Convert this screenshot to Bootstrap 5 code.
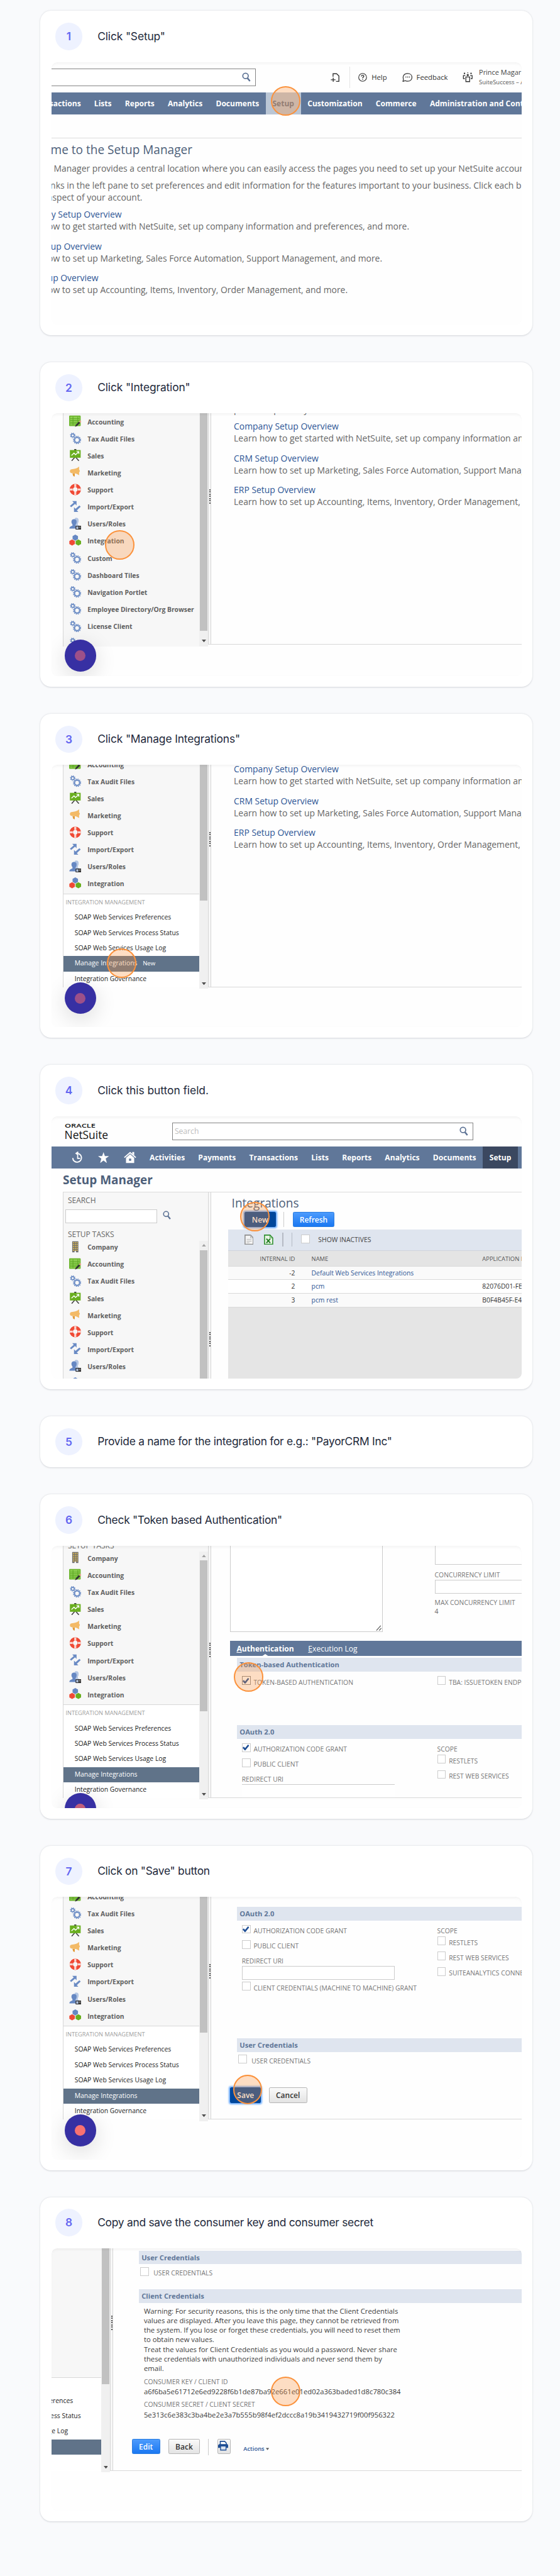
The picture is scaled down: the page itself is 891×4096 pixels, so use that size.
<!DOCTYPE html>
<html lang="en">
<head>
<meta charset="utf-8">
<meta name="viewport" content="width=device-width, initial-scale=1">
<title>NetSuite integration setup guide</title>
<link href="https://cdn.jsdelivr.net/npm/bootstrap@5.3.0/dist/css/bootstrap.min.css" rel="stylesheet">
<style>
html{overflow:hidden;background:#f9fafc}
body{zoom:.8695;background:#f9fafc;font-family:"Open Sans","Noto Sans",sans-serif;color:#1e293b;overflow:hidden}
.guide{width:900px;margin-left:74px;padding-top:20px;padding-bottom:94px;gap:49.5px}
.step{border:0;border-radius:20px;background:#fff;height:593px;padding:0 20px;box-shadow:0 1px 3px rgba(15,23,42,.17)}
.step-short{height:93.5px}
.step-head{height:93.5px;flex:none;padding-left:7px;gap:27.5px}
.step-short .step-head{height:93.5px}
.step-num{width:50px;height:50px;background:#eef2ff;color:#6366f1;font:600 20px/1 Inter,sans-serif}
.step-title{font:400 20px/28px Inter,sans-serif;color:#1e293b;margin:0;white-space:nowrap;letter-spacing:-.3px}
.step:nth-child(-n+3) .step-title{letter-spacing:-.14px}
.step:nth-child(4) .step-title{letter-spacing:-.04px}
/* captured window */
.shot{position:relative;height:480px;flex:none;overflow:hidden;border-radius:10px;background:#fefefe;white-space:nowrap;font-size:12px;line-height:16px;color:#666}
.shot::after{content:"";position:absolute;inset:0;border-radius:10px;box-shadow:inset 0 6px 6px -4px rgba(0,0,0,.05),inset 0 0 2px rgba(0,0,0,.025);pointer-events:none}
.tap{position:absolute;width:54px;height:54px;margin:-27px 0 0 -27px;border:2.4px solid #fb923c;border-radius:50%;background:rgba(251,146,60,.3)}
.rec{position:absolute;left:24px;width:58px;height:58px;border-radius:50%;background:#3730a3;box-shadow:0 10px 40px rgba(0,0,0,.14);display:flex;align-items:center;justify-content:center}
.rec i{width:20px;height:20px;border-radius:50%;background:#9d5089}
.tap1{left:429px;top:71.5px}.tap2{left:125.5px;top:240.5px}.tap3{left:129px;top:363px}.tap4{left:372.3px;top:184.3px}
.tap6{left:360.4px;top:239.9px}.tap7{left:359.2px;top:352.2px}.tap8{left:429.2px;top:261.7px}
.rec2{top:414px}.rec3{top:398px}.rec6{top:452.5px}.rec6 i{background:#c25f7b}.rec7{top:398px}.rec7 i{background:#f87171}
/* header */
.topbar{height:56px}
.find{height:32px;border:1.5px solid #858585;background:#fff;margin-top:12px;flex:none;padding:0 8px 0 3px;font-size:14px;color:#bdbdbd}
.find-a{width:384px;margin-left:-10px}.find-b{width:550.5px;margin-left:221.5px}
.tool{font-size:13px;font-weight:500;color:#333}
.tool-page{margin-left:136.5px}
.vline{width:1px;height:39px;background:#e4e4e4;margin:0 15px 0 18.5px}
.who{font-size:12.6px;line-height:18px;color:#444}.who small{font-size:10.9px;display:block;color:#555}
.gbar{height:40px;background:#607799;color:#fff;font-weight:700;font-size:13.9px}
.gbar span{padding:1px 12.2px 0;height:40px;line-height:40px;flex:none}
.gbar-a{padding-left:0}.gbar-a span:first-child{margin-left:-47.4px}
.gbar .hot{background:#bac6d5;color:#66758c}
.gbar .cur{background:#3b4860}
.gico{width:47.8px;flex:none;text-align:center}
.gbar-b{padding-left:24.3px}
/* setup home text */
.intro{font-size:16px;line-height:21.7px;color:#666}
.intro p{margin:0 0 14.7px}.intro b{font-weight:400;color:#2d5595;display:block}
.home-line{height:43px;border-bottom:2px solid #dcdcdc}
.home{margin-left:-63px;padding-top:6px}
.big{font-size:21.9px;line-height:30px;color:#4d5f79;margin:0}
.home .big{margin-bottom:9.5px}
.home .p1{margin:0 0 9.4px -11.5px}.home .p2{margin:0 0 9.6px}.home .p2 span{margin-left:-8px}
/* sidebar */
.pane-side{width:250px;margin-left:20.5px;border-left:2px solid #d8d8d8;background:#f7f7f7;overflow:hidden;flex:none;display:flex;flex-direction:column}
.task{height:31.2px;flex:none;display:flex;align-items:center;padding:0 0 2.5px 10.5px;gap:11.5px;font-weight:700;color:#606060;font-size:11.9px}
.task svg{width:22.5px;height:22.5px;margin-top:-4px;flex:none}
.subs{background:#fff;border-top:2px solid #d8d8d8;flex:1 0 auto;color:#222}
.subs h6{font-size:10.6px;line-height:16px;margin:6.5px 0 6.5px 4.5px;font-weight:400;color:#a0a0a0}
.subs div{height:28px;line-height:27px;padding-left:21px;font-size:11.95px}
.subs .on{background:#607389;color:#fff}.subs .on small{font-size:11px;margin-left:10px}
.track{width:16.5px;flex:none;background:#f0f0f0;display:flex;flex-direction:column;align-items:center;padding:0 1px 0 1px}
.thumb{width:14px;background:#c1c1c1}
.track svg{width:8px;height:5px;display:block}
.track .dn{margin:auto 0 7px}
.grip{width:5px;flex:none;background:#f7f7f7;border:solid #d6d6d6;border-width:0 1.5px 0 1px;align-self:stretch}
.grip i{display:block;width:2px;height:27px;margin-left:1px;background:repeating-linear-gradient(#555 0 2px,transparent 2px 4px)}
.pane-main{flex:1 1 0;min-width:0;overflow:hidden}
.right{flex:1 1 0;min-width:0;border-bottom:2px solid #d9d9d9;display:flex}
.s2 .pane-side,.s2 .track{height:426px}.s2 .right{height:423px}.s2 .task:first-child{margin-top:2px}.s2 .thumb{height:398px}.s2 .grip i{margin-top:139px}
.s2 .intro{padding-left:42px;margin-top:-17.5px}.s2 .intro .cut{margin-bottom:9.6px}
.s3 .pane-side{height:407px}.s3 .track{height:410px}.s3 .right{height:407px}.s3 .task:first-child{margin-top:-13.7px}.s3 .thumb{height:248.6px}.s3 .grip i{margin-top:123px}
.s3 .intro{padding-left:42px;margin-top:-2px}
.s8 .pane-side{margin-left:-159px}
.s8 .fill{height:235.4px;flex:none}
/* shot 4 */
.logo{margin-left:24px;padding-top:12.5px;width:90px;color:#111}
.logo span{display:block;font:600 10px/12px "Open Sans",sans-serif;transform:scaleX(1.47);transform-origin:0 0;width:40px}
.logo b{display:block;font-weight:400;font-size:20px;line-height:22px;margin-top:-1.5px}
.s4 .find-b{margin-left:107.5px}
.mgr{height:43px;line-height:43px;font-size:21.8px;font-weight:700;color:#4d5f79;padding-left:21px}
.s4 .split{height:342px}.s4 .pane-side,.s4 .track{height:342px}.s4 .pane-side,.s4 .right{border-top:2px solid #dcdcdc}
.s4 .right{border-bottom:0;height:342px}
.s4 .track{margin-top:88px;height:254px;padding-top:6px}.s4 .thumb{margin-top:6px;height:240px}
.s4 .track-col{background:#f7f7f7;border-top:2px solid #dcdcdc}
.s4 .grip i{margin-top:255px}
.cap{font-size:13.8px;line-height:18px;color:#666;padding-left:8.5px;flex:none}
.qbox{width:168px;height:25px;border:1.5px solid #ccc;background:#fff;margin:0 0 0 4.5px}
.list-box{margin-left:32px}
.list-box .big{padding-left:6px;height:35px;line-height:40px}
.bt{height:28px;border-radius:2.5px;font-size:13.8px;font-weight:600;line-height:27px;text-align:center;flex:none;color:#fff;background:linear-gradient(#4c9bfd,#1a78f2);border:1px solid #2b7de0;padding:0}
.bt-dark{background:#00479b;border-color:#00479b;box-shadow:0 0 3px 2px rgba(70,150,250,.8)}
.bt-grey{background:linear-gradient(#fafafa,#e3e3e3);border-color:#b5b5b5;color:#333}
.vs{width:1.5px;background:#ccc;flex:none}
.tools{height:39px;background:#dfe5ef;margin-top:4px;border-bottom:1px solid #cfd4dc}
.box{width:16px;height:16px;border:1.2px solid #ccc;background:#fff;flex:none;display:block}
.grid-row{height:24.9px;line-height:23px;border-bottom:1.3px solid #dadada;background:#fafafa;color:#333;display:flex;font-size:11.95px}
.grid-row span:nth-child(1){width:122px;text-align:right;flex:none}.grid-row span:nth-child(2){width:312.5px;margin-left:30px;flex:none;color:#2d5595}
.grid-row.hd{height:29px;line-height:29px;font-size:10.85px;background:#e4e4e4;color:#555}.grid-row.hd span:nth-child(2){color:#555}
.rest{background:#e5e5e5;height:140px}
/* forms */
.form-lab{color:#777;font-size:11.9px}
.s6 .split{height:464px}.s6 .pane-side{height:461.5px}.s6 .track{height:453.5px;margin-top:10.5px;padding-top:6px}.s6 .track-col{background:#f7f7f7}
.s6 .right{height:461.5px}.s6 .cap{margin-top:-9px;margin-bottom:1px}.s6 .thumb{height:276px;margin-top:5px}.s6 .grip i{margin-top:177.7px}
.area{width:280px;height:157.5px;border:1.5px solid #ccc;border-top:0;margin-left:34.5px;background:#fff;flex:none}
.side-fields{margin-left:95px}
.side-fields .b1{height:34.5px;width:200px;border:1.5px solid #ccc;border-top:0;margin-bottom:12.5px;background:#fff}
.side-fields .b2{height:25.5px;width:200px;border:1.5px solid #ccc;margin-bottom:8.5px;background:#fff}
.tabs6{height:28px;margin:16.3px 0 0 34.5px;background:#607799;color:#fff;font-size:13.9px;line-height:29px;padding-left:12.5px;gap:26px}
.tabs6 b{position:relative}
.tabs6 b::after{content:"";position:absolute;left:46px;bottom:-1px;border:solid transparent;border-width:0 8px 5px;border-bottom-color:#fff}
.band{height:25px;line-height:25px;background:#dfe5ef;color:#607799;font-weight:700;font-size:12.9px;padding-left:4.5px;margin-left:48px}
.cols{margin-left:56.5px;display:flex}
.cols>div:first-child{width:357.5px;flex:none}
.ck{height:28px;display:flex;gap:5.5px}.ck .form-lab{padding-top:4px}
.ck .box{display:flex;align-items:center;justify-content:center}
.redir{height:25px;width:280px;border:1.5px solid #ccc;background:#fff}
.pt8{padding-top:8px}.scope{margin:12px 0 1.3px}
.uc{margin-left:50.5px;padding-top:5px;gap:8px}
.warn{font-size:13px;line-height:17.6px;color:#3c3c3c;margin-left:56.8px}
</style>
</head>
<body>
<svg width="0" height="0" class="position-absolute top-0">
<symbol id="mag" viewBox="0 0 16 18"><circle cx="6.5" cy="6.5" r="5" fill="none" stroke="#5d7395" stroke-width="2"/><path d="M10 10.5l4.6 5.6" stroke="#5d7395" stroke-width="2.8"/></symbol>
<symbol id="gears" viewBox="0 0 24 24"><g fill="none" stroke="#6a8bc4"><circle cx="7" cy="6.5" r="3" stroke-width="2"/><circle cx="7" cy="6.5" r="4.6" stroke-width="1.5" stroke-dasharray="1.7 1.91"/><circle cx="15.5" cy="15.5" r="5" stroke-width="2.6"/><circle cx="15.5" cy="15.5" r="7.1" stroke-width="2" stroke-dasharray="2 1.72"/></g></symbol>
<symbol id="book" viewBox="0 0 24 24"><rect x="0" y="1" width="22.5" height="20.5" rx="1.5" fill="#6cb52d"/><rect x="2" y="3" width="18.5" height="16.5" fill="#8fd053"/><path d="M7.5 3v16.5M17 3v16.5M2 7h18M2 10.5h18M2 14h18M2 17h18" stroke="#5aa520" stroke-width="1.2"/><path d="M11.5 23l1.5-4 6-6 2.5 2.3-6 6z" fill="#333"/><path d="M19.5 12.5l2-2 2.2 2.2-2 2z" fill="#f19a8b"/></symbol>
<symbol id="chart" viewBox="0 0 24 24"><path d="M11 0h2v3h-2zM12 15l-7 8M12 15l7 8" stroke="#444" stroke-width="2" fill="#444"/><rect x="1.5" y="2" width="21" height="15" fill="#6aaf1f"/><path d="M4.5 12.5l5-4.5 3 3 5.500-5M14.500 5h4.500v4.500" stroke="#fff" stroke-width="1.7" fill="none"/></symbol>
<symbol id="horn" viewBox="0 0 24 24"><path d="M1.500 10c0-3 2-4 5-4 5 0 10-2 13-5v6.500a2.500 2.500 0 010 4.500v6c-3-2.500-7-4-13-4-3 0-5-1-5-4z" fill="#f3ba66"/><path d="M6.500 14.500h4.500v6l-3-1z" fill="#e29a35"/></symbol>
<symbol id="buoy" viewBox="0 0 24 24"><circle cx="12" cy="11.500" r="7.800" fill="none" stroke="#f04a35" stroke-width="6.600"/><path d="M12 .5v6.500M12 16v6.500M1 11.500h6M17 11.500h6" stroke="#fad6cf" stroke-width="4"/></symbol>
<symbol id="swap" viewBox="0 0 24 24"><path d="M6 1h8.500v8.500l-3-3L4 13l-2.500-2.500L9 4z" fill="#6a8bc4"/><path d="M18 22H9.500v-9l3 3L20 9.500l2.500 2.500-7.500 7z" fill="#6a8bc4"/></symbol>
<symbol id="user" viewBox="0 0 24 24"><path d="M11 1c4-2 8 0 7.500 5 0 3-1 4-1.500 5v3l5 3v2H12z" fill="#b4c6e3"/><path d="M9.500 3c4 0 5.500 3 5 6.500-.5 3-1.500 3.500-2 4.500v2l5 3v2.500H.5c0-4 3-4.500 6-6v-2C5 11.500 4.500 10 4.500 8 4.500 5 6.500 3 9.500 3z" fill="#6688c3"/><rect x="12.500" y="16" width="11.500" height="7.500" rx="1.200" fill="#333"/><path d="M14 17.500h3.800v4.500H14z" fill="#b4c6e3"/><path d="M19 17.500h3.500v3H19z" fill="#777"/></symbol>
<symbol id="hexes" viewBox="0 0 24 24"><path d="M12 0l5.300 3v6L12 12 6.700 9V3z" fill="#6688c3"/><path d="M5.800 9.500l5.400 3v6l-5.400 3-5.400-3v-6z" fill="#f04a35"/><path d="M18 9.500l5.400 3v6l-5.400 3-5.400-3v-6z" fill="#6aaf1f"/></symbol>
<symbol id="tower" viewBox="0 0 24 24"><path d="M6 1h12v21.500h-4.500V20h-3v2.500H6z" fill="#6e6e6e"/><path d="M8.500 2.500v17M12 2.500v17M15.500 2.500v17" stroke="#e0bd55" stroke-width="2" stroke-dasharray="2.400 1.300"/></symbol>
<symbol id="dn" viewBox="0 0 8 5"><path d="M0 0h8L4 5z" fill="#505050"/></symbol>
<symbol id="up" viewBox="0 0 8 5"><path d="M0 5h8L4 0z" fill="#a0a0a0"/></symbol>
<symbol id="tick" viewBox="0 0 12 12"><path d="M1 6l3.500 4L11 2" stroke="#1f4f95" stroke-width="3" fill="none"/></symbol>
</svg>

<main class="guide d-flex flex-column">

<section class="card step">
<div class="step-head d-flex align-items-center"><span class="step-num rounded-circle d-flex align-items-center justify-content-center">1</span><h2 class="step-title">Click "Setup"</h2></div>
<div class="shot">
 <div class="topbar d-flex">
  <div class="find find-a d-flex align-items-center justify-content-end"><svg width="16" height="18"><use href="#mag"/></svg></div>
  <div class="tool d-flex align-items-center">
   <svg class="tool-page" width="17" height="17" viewBox="0 0 17 17" fill="none" stroke="#333" stroke-width="1.600"><path d="M4.500 7V1.500h6.500L15.200 5.500v10H10M4.800 8.500v8M.5 12.500h8.500"/></svg>
   <i class="vline"></i>
   <svg width="16" height="16" viewBox="0 0 16 16" fill="none" stroke="#333" stroke-width="1.300"><circle cx="8" cy="8" r="7.200"/><path d="M5.800 6.200C5.800 3.400 10.300 3.500 10.200 6.100 10.100 7.600 8 7.700 8 9.600M8 11v1.500" stroke-width="1.600"/></svg>
   <span style="margin-left:8px">Help</span>
   <svg style="margin-left:28px" width="19" height="17" viewBox="0 0 19 17" fill="none" stroke="#333" stroke-width="1.400"><path d="M1.200 15.800l1-4.200C0 5 4 1 9.800 1c5 0 8 3 8 7s-3 7-8 7c-2 0-3.500-.4-4.600-1z"/><path d="M6 7.500h1.600M9.200 7.500h1.600M12.400 7.500H14" stroke-width="1.800"/></svg>
   <span style="margin-left:7px">Feedback</span>
   <svg style="margin-left:27px" width="19" height="18" viewBox="0 0 19 18" fill="none" stroke="#333" stroke-width="1.500"><path d="M6 8.500h7v8.500H6zM1.500 12V6h3.500M17.500 12V6H14M1.500 11.500H4M17.500 11.500H15"/><g fill="#333" stroke="none"><circle cx="9.500" cy="5" r="1.900"/><circle cx="3.500" cy="1.900" r="1.400"/><circle cx="9.500" cy="1" r=".9"/><circle cx="15.500" cy="1.900" r="1.400"/></g></svg>
   <div class="who" style="margin-left:11px">Prince Magar<small>SuiteSuccess – Admin</small></div>
  </div>
 </div>
 <div class="gbar gbar-a d-flex"><span>Transactions</span><span>Lists</span><span>Reports</span><span>Analytics</span><span>Documents</span><span class="hot">Setup</span><span>Customization</span><span>Commerce</span><span>Administration and Controls</span></div>
 <div class="home-line"></div>
 <div class="home intro">
  <h3 class="big">Welcome to the Setup Manager</h3>
  <p class="p1">The Setup Manager provides a central location where you can easily access the pages you need to set up your NetSuite account.</p>
  <p class="p2"><span>Use the links in the left pane to set preferences and edit information for the features important to your business. Click each blue link</span><br>private aspect of your account.</p>
  <p><b>Company Setup Overview</b>Learn how to get started with NetSuite, set up company information and preferences, and more.</p>
  <p><b>CRM Setup Overview</b>Learn how to set up Marketing, Sales Force Automation, Support Management, and more.</p>
  <p><b>ERP Setup Overview</b>Learn how to set up Accounting, Items, Inventory, Order Management, and more.</p>
 </div>
 <i class="tap tap1"></i>
</div>
</section>

<section class="card step">
<div class="step-head d-flex align-items-center"><span class="step-num rounded-circle d-flex align-items-center justify-content-center">2</span><h2 class="step-title">Click "Integration"</h2></div>
<div class="shot s2">
 <div class="split d-flex align-items-start">
  <div class="pane-side">
   <div class="task"><svg><use href="#book"/></svg>Accounting</div>
   <div class="task"><svg><use href="#gears"/></svg>Tax Audit Files</div>
   <div class="task"><svg><use href="#chart"/></svg>Sales</div>
   <div class="task"><svg><use href="#horn"/></svg>Marketing</div>
   <div class="task"><svg><use href="#buoy"/></svg>Support</div>
   <div class="task"><svg><use href="#swap"/></svg>Import/Export</div>
   <div class="task"><svg><use href="#user"/></svg>Users/Roles</div>
   <div class="task"><svg><use href="#hexes"/></svg>Integration</div>
   <div class="task"><svg><use href="#gears"/></svg>Custom</div>
   <div class="task"><svg><use href="#gears"/></svg>Dashboard Tiles</div>
   <div class="task"><svg><use href="#gears"/></svg>Navigation Portlet</div>
   <div class="task"><svg><use href="#gears"/></svg>Employee Directory/Org Browser</div>
   <div class="task"><svg><use href="#gears"/></svg>License Client</div>
   <div class="task"><svg><use href="#gears"/></svg></div>
  </div>
  <div class="track"><i class="thumb"></i><svg class="dn"><use href="#dn"/></svg></div>
  <div class="right"><div class="grip"><i></i></div>
   <div class="pane-main intro"><p class="cut">private aspect of your account.</p>
    <p><b>Company Setup Overview</b>Learn how to get started with NetSuite, set up company information and preferences, and more.</p>
    <p><b>CRM Setup Overview</b>Learn how to set up Marketing, Sales Force Automation, Support Management, and more.</p>
    <p><b>ERP Setup Overview</b>Learn how to set up Accounting, Items, Inventory, Order Management, and more.</p></div></div>
 </div>
 <i class="tap tap2"></i><span class="rec rec2"><i></i></span>
</div>
</section>

<section class="card step">
<div class="step-head d-flex align-items-center"><span class="step-num rounded-circle d-flex align-items-center justify-content-center">3</span><h2 class="step-title">Click "Manage Integrations"</h2></div>
<div class="shot s3">
 <div class="split d-flex align-items-start">
  <div class="pane-side">
   <div class="task"><svg><use href="#book"/></svg>Accounting</div>
   <div class="task"><svg><use href="#gears"/></svg>Tax Audit Files</div>
   <div class="task"><svg><use href="#chart"/></svg>Sales</div>
   <div class="task"><svg><use href="#horn"/></svg>Marketing</div>
   <div class="task"><svg><use href="#buoy"/></svg>Support</div>
   <div class="task"><svg><use href="#swap"/></svg>Import/Export</div>
   <div class="task"><svg><use href="#user"/></svg>Users/Roles</div>
   <div class="task"><svg><use href="#hexes"/></svg>Integration</div>
   <div class="subs"><h6>INTEGRATION MANAGEMENT</h6><div>SOAP Web Services Preferences</div><div>SOAP Web Services Process Status</div><div>SOAP Web Services Usage Log</div><div class="on">Manage Integrations<small>New</small></div><div>Integration Governance</div></div>
  </div>
  <div class="track"><i class="thumb"></i><svg class="dn"><use href="#dn"/></svg></div>
  <div class="right"><div class="grip"><i></i></div>
   <div class="pane-main intro">
    <p><b>Company Setup Overview</b>Learn how to get started with NetSuite, set up company information and preferences, and more.</p>
    <p><b>CRM Setup Overview</b>Learn how to set up Marketing, Sales Force Automation, Support Management, and more.</p>
    <p><b>ERP Setup Overview</b>Learn how to set up Accounting, Items, Inventory, Order Management, and more.</p></div></div>
 </div>
 <i class="tap tap3"></i><span class="rec rec3"><i></i></span>
</div>
</section>

<section class="card step">
<div class="step-head d-flex align-items-center"><span class="step-num rounded-circle d-flex align-items-center justify-content-center">4</span><h2 class="step-title">Click this button field.</h2></div>
<div class="shot s4">
 <div class="topbar d-flex">
  <div class="logo"><span>ORACLE</span><b>NetSuite</b></div>
  <div class="find find-b d-flex align-items-center justify-content-between">Search<svg width="16" height="18"><use href="#mag"/></svg></div>
 </div>
 <div class="gbar gbar-b d-flex align-items-center">
  <div class="gico"><svg width="22" height="22" viewBox="0 0 22 22" fill="none" stroke="#fff" stroke-width="2.200"><path d="M9 3.500a8 8 0 11-7 8.500"/><path d="M12 .5L8 3.500l4 3M11 7v5.500h4.500" stroke-width="2"/></svg></div>
  <div class="gico"><svg width="20" height="20" viewBox="0 0 20 20"><path d="M10 0l2.500 7.300H20l-6 4.600L16.200 20 10 15.200 3.800 20 6 11.900 0 7.300h7.500z" fill="#fff"/></svg></div>
  <div class="gico"><svg width="23" height="22" viewBox="0 0 23 22"><path d="M1 11L11.500 2 22 11" fill="none" stroke="#fff" stroke-width="2"/><path d="M15.500 1H19v6l-3.500-3zM4 11.500L11.500 5l7.500 6.500V21H4zM9.500 13v4h4v-4z" fill="#fff" fill-rule="evenodd"/></svg></div>
  <span>Activities</span><span>Payments</span><span>Transactions</span><span>Lists</span><span>Reports</span><span>Analytics</span><span>Documents</span><span class="cur">Setup</span></div>
 <div class="mgr">Setup Manager</div>
 <div class="split d-flex align-items-start">
  <div class="pane-side">
   <div class="cap" style="margin:5px 0 7.500px">SEARCH</div>
   <div class="d-flex align-items-center"><div class="qbox"></div><svg style="margin:-4px 0 0 10px" width="15" height="17"><use href="#mag"/></svg></div>
   <div class="cap" style="margin:12px 0 1px">SETUP TASKS</div>
   <div class="task"><svg><use href="#tower"/></svg>Company</div>
   <div class="task"><svg><use href="#book"/></svg>Accounting</div>
   <div class="task"><svg><use href="#gears"/></svg>Tax Audit Files</div>
   <div class="task"><svg><use href="#chart"/></svg>Sales</div>
   <div class="task"><svg><use href="#horn"/></svg>Marketing</div>
   <div class="task"><svg><use href="#buoy"/></svg>Support</div>
   <div class="task"><svg><use href="#swap"/></svg>Import/Export</div>
   <div class="task"><svg><use href="#user"/></svg>Users/Roles</div>
   <div class="task"><svg><use href="#hexes"/></svg></div>
  </div>
  <div class="track-col"><div class="track"><svg><use href="#up"/></svg><i class="thumb"></i></div></div>
  <div class="right"><div class="grip"><i></i></div>
   <div class="pane-main"><div class="list-box">
    <h3 class="big">Integrations</h3>
    <div class="d-flex"><div class="bt bt-dark" style="width:57px;margin-left:29.500px">New</div><i class="vs" style="margin:0 15px 0 14.500px"></i><div class="bt" style="width:77px">Refresh</div></div>
    <div class="tools d-flex align-items-center">
     <svg style="margin-left:29px" width="17" height="19" viewBox="0 0 17 19"><path d="M1 1h10l5 5v12H1z" fill="#f4f4f4" stroke="#8f8f8f" stroke-width="1.800"/><path d="M11 1v5h5M4 9h9M4 12h9M4 15h5" fill="none" stroke="#b5b5b5" stroke-width="1.200"/></svg>
     <svg style="margin-left:19px" width="17" height="19" viewBox="0 0 17 19"><path d="M1 1h10l5 5v12H1z" fill="#e7f4e3" stroke="#2f8f2f" stroke-width="1.800"/><path d="M11 1v5h5" fill="none" stroke="#2f8f2f"/><path d="M4.500 7.500l7 8M11.500 7.500l-7 8" stroke="#217a21" stroke-width="2.200"/></svg>
     <i class="vs" style="height:26px;margin-left:17px;background:#b5bac4"></i><i class="vs" style="height:26px;margin-left:15px;background:#b5bac4"></i>
     <i class="box" style="margin:-2px 15.500px 0 16px"></i><span style="color:#444;padding-top:3px">SHOW INACTIVES</span>
    </div>
    <div class="grid-row hd"><span>INTERNAL ID</span><span>NAME</span><span>APPLICATION ID</span></div>
    <div class="grid-row"><span>-2</span><span>Default Web Services Integrations</span></div>
    <div class="grid-row bg-white"><span>2</span><span>pcm</span><span>82076D01-FE</span></div>
    <div class="grid-row"><span>3</span><span>pcm rest</span><span>B0F4B45F-E4</span></div>
    <div class="rest"></div>
   </div></div></div>
 </div>
 <i class="tap tap4"></i>
</div>
</section>

<section class="card step step-short">
<div class="step-head d-flex align-items-center"><span class="step-num rounded-circle d-flex align-items-center justify-content-center">5</span><h2 class="step-title">Provide a name for the integration for e.g.: "PayorCRM Inc"</h2></div>
</section>

<section class="card step">
<div class="step-head d-flex align-items-center"><span class="step-num rounded-circle d-flex align-items-center justify-content-center">6</span><h2 class="step-title">Check "Token based Authentication"</h2></div>
<div class="shot s6">
 <div class="split d-flex align-items-start">
  <div class="pane-side">
   <div class="cap">SETUP TASKS</div>
   <div class="task"><svg><use href="#tower"/></svg>Company</div>
   <div class="task"><svg><use href="#book"/></svg>Accounting</div>
   <div class="task"><svg><use href="#gears"/></svg>Tax Audit Files</div>
   <div class="task"><svg><use href="#chart"/></svg>Sales</div>
   <div class="task"><svg><use href="#horn"/></svg>Marketing</div>
   <div class="task"><svg><use href="#buoy"/></svg>Support</div>
   <div class="task"><svg><use href="#swap"/></svg>Import/Export</div>
   <div class="task"><svg><use href="#user"/></svg>Users/Roles</div>
   <div class="task"><svg><use href="#hexes"/></svg>Integration</div>
   <div class="subs"><h6>INTEGRATION MANAGEMENT</h6><div>SOAP Web Services Preferences</div><div>SOAP Web Services Process Status</div><div>SOAP Web Services Usage Log</div><div class="on">Manage Integrations</div><div>Integration Governance</div></div>
  </div>
  <div class="track-col"><div class="track"><svg><use href="#up"/></svg><i class="thumb"></i><svg class="dn"><use href="#dn"/></svg></div></div>
  <div class="right"><div class="grip"><i></i></div>
   <div class="pane-main">
    <div class="d-flex">
     <div class="area d-flex align-items-end justify-content-end"><svg width="11" height="11" viewBox="0 0 11 11"><path d="M1 10L9 1M6 10l4-4.500" stroke="#555" stroke-width="1.300"/></svg></div>
     <div class="side-fields"><div class="b1"></div><div class="form-lab">CONCURRENCY LIMIT</div><div class="b2"></div><div class="form-lab">MAX CONCURRENCY LIMIT</div><div>4</div></div>
    </div>
    <div class="tabs6 d-flex"><b><u>A</u>uthentication</b><span><u>E</u>xecution Log</span></div>
    <div class="band" style="margin-top:4px">Token-based Authentication</div>
    <div class="cols pt8" style="height:97.500px"><div><div class="ck"><i class="box" style="border-color:#888"><svg width="12" height="12"><use href="#tick"/></svg></i><span class="form-lab">TOKEN-BASED AUTHENTICATION</span></div></div><div><div class="ck"><i class="box"></i><span class="form-lab">TBA: ISSUETOKEN ENDPOINT</span></div></div></div>
    <div class="band">OAuth 2.0</div>
    <div class="cols">
     <div class="pt8"><div class="ck"><i class="box"><svg width="12" height="12"><use href="#tick"/></svg></i><span class="form-lab">AUTHORIZATION CODE GRANT</span></div><div class="ck"><i class="box"></i><span class="form-lab">PUBLIC CLIENT</span></div><div class="form-lab" style="margin-top:3.500px">REDIRECT URI</div><div class="redir" style="border-width:1.500px 0 0"></div></div>
     <div><div class="form-lab scope">SCOPE</div><div class="ck"><i class="box"></i><span class="form-lab">RESTLETS</span></div><div class="ck"><i class="box"></i><span class="form-lab">REST WEB SERVICES</span></div></div>
    </div>
   </div></div>
 </div>
 <i class="tap tap6"></i><span class="rec rec6"><i></i></span>
</div>
</section>

<section class="card step">
<div class="step-head d-flex align-items-center"><span class="step-num rounded-circle d-flex align-items-center justify-content-center">7</span><h2 class="step-title">Click on "Save" button</h2></div>
<div class="shot s3">
 <div class="split d-flex align-items-start">
  <div class="pane-side">
   <div class="task"><svg><use href="#book"/></svg>Accounting</div>
   <div class="task"><svg><use href="#gears"/></svg>Tax Audit Files</div>
   <div class="task"><svg><use href="#chart"/></svg>Sales</div>
   <div class="task"><svg><use href="#horn"/></svg>Marketing</div>
   <div class="task"><svg><use href="#buoy"/></svg>Support</div>
   <div class="task"><svg><use href="#swap"/></svg>Import/Export</div>
   <div class="task"><svg><use href="#user"/></svg>Users/Roles</div>
   <div class="task"><svg><use href="#hexes"/></svg>Integration</div>
   <div class="subs"><h6>INTEGRATION MANAGEMENT</h6><div>SOAP Web Services Preferences</div><div>SOAP Web Services Process Status</div><div>SOAP Web Services Usage Log</div><div class="on">Manage Integrations</div><div>Integration Governance</div></div>
  </div>
  <div class="track"><i class="thumb"></i><svg class="dn"><use href="#dn"/></svg></div>
  <div class="right"><div class="grip"><i></i></div>
   <div class="pane-main">
    <div class="band" style="margin-top:18px">OAuth 2.0</div>
    <div class="cols" style="height:216px">
     <div class="pt8"><div class="ck"><i class="box"><svg width="12" height="12"><use href="#tick"/></svg></i><span class="form-lab">AUTHORIZATION CODE GRANT</span></div><div class="ck"><i class="box"></i><span class="form-lab">PUBLIC CLIENT</span></div><div class="form-lab" style="margin-top:3.500px">REDIRECT URI</div><div class="redir"></div><div class="ck" style="margin-top:4px"><i class="box"></i><span class="form-lab">CLIENT CREDENTIALS (MACHINE TO MACHINE) GRANT</span></div></div>
     <div><div class="form-lab scope">SCOPE</div><div class="ck"><i class="box"></i><span class="form-lab">RESTLETS</span></div><div class="ck"><i class="box"></i><span class="form-lab">REST WEB SERVICES</span></div><div class="ck"><i class="box"></i><span class="form-lab">SUITEANALYTICS CONNECT</span></div></div>
    </div>
    <div class="band">User Credentials</div>
    <div class="ck uc"><i class="box"></i><span class="form-lab">USER CREDENTIALS</span></div>
    <div class="d-flex" style="margin:36.500px 0 0 35.500px"><div class="bt bt-dark" style="width:56px">Save</div><div class="bt bt-grey" style="width:70px;margin-left:14.500px">Cancel</div></div>
   </div></div>
 </div>
 <i class="tap tap7"></i><span class="rec rec7"><i></i></span>
</div>
</section>

<section class="card step">
<div class="step-head d-flex align-items-center"><span class="step-num rounded-circle d-flex align-items-center justify-content-center">8</span><h2 class="step-title">Copy and save the consumer key and consumer secret</h2></div>
<div class="shot s3 s8">
 <div class="split d-flex align-items-start">
  <div class="pane-side">
   <div class="fill"></div>
   <div class="subs"><h6>INTEGRATION MANAGEMENT</h6><div>SOAP Web Services Preferences</div><div>SOAP Web Services Process Status</div><div>SOAP Web Services Usage Log</div><div class="on"></div></div>
  </div>
  <div class="track"><i class="thumb"></i><svg class="dn"><use href="#dn"/></svg></div>
  <div class="right"><div class="grip"><i></i></div>
   <div class="pane-main">
    <div class="band" style="margin-top:4.500px">User Credentials</div>
    <div class="ck uc"><i class="box"></i><span class="form-lab">USER CREDENTIALS</span></div>
    <div class="band" style="margin-top:18px">Client Credentials</div>
    <div class="warn" style="padding-top:5px">Warning: For security reasons, this is the only time that the Client Credentials<br>values are displayed. After you leave this page, they cannot be retrieved from<br>the system. If you lose or forget these credentials, you will need to reset them<br>to obtain new values.<br>Treat the values for Client Credentials as you would a password. Never share<br>these credentials with unauthorized individuals and never send them by<br>email.
     <div class="form-lab" style="margin-top:7.500px">CONSUMER KEY / CLIENT ID</div>a6f6ba5e61712e6ed9228f6b1de87ba92e661e01ed02a363baded1d8c780c384
     <div class="form-lab" style="margin-top:6.500px">CONSUMER SECRET / CLIENT SECRET</div>5e313c6e383c3ba4be2e3a7b555b98f4ef2dccc8a19b3419432719f00f956322</div>
    <div class="d-flex" style="margin:35.500px 0 0 34.500px"><div class="bt" style="width:52px">Edit</div><div class="bt bt-grey" style="width:58px;margin-left:15px">Back</div><i class="vs" style="margin:0 15px;height:30px"></i><div class="bt bt-grey d-flex justify-content-center" style="width:25px;padding-right:3px"><svg width="19" height="18" viewBox="0 0 19 18" class="flex-shrink-0" style="margin-top:3px"><path d="M4 7V1h8l3 3v3" fill="#fff" stroke="#1f4f95" stroke-width="1.800"/><path d="M2 6h15l2 2v5H0V8z" fill="#1f4f95"/><path d="M4.500 9.500h10v7.500h-10z" fill="#d8e0ee" stroke="#1f4f95" stroke-width="1.600"/></svg></div><span style="margin:10px 0 0 23px;font-size:10.800px;font-weight:600;color:#2d5595;line-height:16px">Actions</span><svg width="6" height="5" style="margin:16px 0 0 3px"><use href="#dn"/></svg></div>
   </div></div>
 </div>
 <i class="tap tap8"></i>
</div>
</section>
</main>
<script src="https://cdn.jsdelivr.net/npm/bootstrap@5.3.0/dist/js/bootstrap.bundle.min.js"></script>
</body>
</html>
